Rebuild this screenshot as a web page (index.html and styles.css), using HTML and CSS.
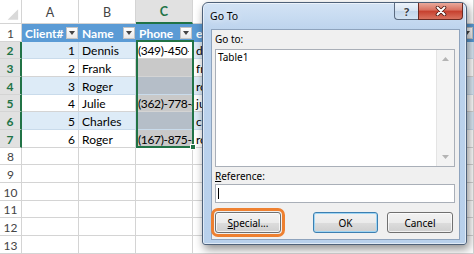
FILE: index.html
```html
<!DOCTYPE html>
<html lang="en">
<head>
    <meta charset="UTF-8">
    <meta name="viewport" content="width=device-width, initial-scale=1.0">
    <title>Go To</title>
    <link rel="stylesheet" href="styles.css">
</head>
<body>
<div class="page">
    <div class="sheet">
        <!-- column headers -->
        <div class="corner"><svg width="22" height="24" viewBox="0 0 22 24"><polygon points="19,9 19,20 8,20" fill="#d9d9d9"/></svg></div>
        <div class="colhd">A</div>
        <div class="colhd">B</div>
        <div class="colhd on">C</div>
        <div class="colhd">D</div>

        <!-- row 1: table header -->
        <div class="rowhd">1</div>
        <div class="th">Client#<span class="dd"></span></div>
        <div class="th">Name<span class="dd"></span></div>
        <div class="th">Phone<span class="dd"></span></div>
        <div class="th">email<span class="dd"></span></div>

        <div class="rowhd on">2</div>
        <div class="cell band num">1</div>
        <div class="cell band">Dennis</div>
        <div class="cell active phone"><span class="clip">(349)-450-2135</span><span class="selection"><span class="handle"></span></span></div>
        <div class="cell band">dennis@mail.com</div>

        <div class="rowhd on">3</div>
        <div class="cell num">2</div>
        <div class="cell">Frank</div>
        <div class="cell shade"></div>
        <div class="cell">frank@mail.com</div>

        <div class="rowhd on">4</div>
        <div class="cell band num">3</div>
        <div class="cell band">Roger</div>
        <div class="cell band shade"></div>
        <div class="cell band">roger@mail.com</div>

        <div class="rowhd on">5</div>
        <div class="cell num">4</div>
        <div class="cell">Julie</div>
        <div class="cell shade phone">(362)-778-4410</div>
        <div class="cell">julie@mail.com</div>

        <div class="rowhd on">6</div>
        <div class="cell band num">5</div>
        <div class="cell band">Charles</div>
        <div class="cell band shade"></div>
        <div class="cell band">charles@mail.com</div>

        <div class="rowhd on">7</div>
        <div class="cell num">6</div>
        <div class="cell">Roger</div>
        <div class="cell shade phone">(167)-875-3092</div>
        <div class="cell">roger.b@mail.com</div>

        <div class="rowhd">8</div><div class="cell"></div><div class="cell"></div><div class="cell"></div><div class="cell"></div>
        <div class="rowhd">9</div><div class="cell"></div><div class="cell"></div><div class="cell"></div><div class="cell"></div>
        <div class="rowhd">10</div><div class="cell"></div><div class="cell"></div><div class="cell"></div><div class="cell"></div>
        <div class="rowhd">11</div><div class="cell"></div><div class="cell"></div><div class="cell"></div><div class="cell"></div>
        <div class="rowhd">12</div><div class="cell"></div><div class="cell"></div><div class="cell"></div><div class="cell"></div>
        <div class="rowhd">13</div><div class="cell"></div><div class="cell"></div><div class="cell"></div><div class="cell"></div>
    </div>

    <!-- Go To dialog -->
    <div class="dialog">
        <div class="titlebar">
            <span class="title">Go To</span>
            <div class="captions">
                <span class="help">?</span>
                <span class="close"><svg width="14" height="10" viewBox="0 0 14 10"><path d="M3.5 1.5 L10.5 8.5 M10.5 1.5 L3.5 8.5" stroke="#4b1710" stroke-width="3.6" stroke-linecap="round"/><path d="M3.5 1.5 L10.5 8.5 M10.5 1.5 L3.5 8.5" stroke="#fff" stroke-width="2" stroke-linecap="round"/></svg></span>
            </div>
        </div>
        <div class="client">
            <label>Go to:</label>
            <div class="listbox">
                <div class="items">Table1</div>
                <div class="vscroll">
                    <svg width="7" height="4" viewBox="0 0 7 4"><polygon points="0,4 7,4 3.5,0" fill="#b4b4b4"/></svg>
                    <svg width="7" height="4" viewBox="0 0 7 4"><polygon points="0,0 7,0 3.5,4" fill="#b4b4b4"/></svg>
                </div>
            </div>
            <label><u>R</u>eference:</label>
            <div class="input"><span class="caret"></span></div>
            <div class="buttons">
                <button class="special"><u>S</u>pecial...</button>
                <span class="spacer"></span>
                <button class="default">OK</button>
                <button>Cancel</button>
            </div>
        </div>
    </div>
</div>
</body>
</html>
```

FILE: styles.css
```css
body {
    margin: 0;
    background: #fff;
    font-family: "Lato", "Liberation Sans", sans-serif;
}
.page {
    position: relative;
    width: 474px;
    height: 254px;
    overflow: hidden;
}

/* spreadsheet */
.sheet {
    display: grid;
    grid-template-columns: 22px 57px 57px 57px 1fr;
    grid-template-rows: 24px repeat(4, 18px 17px 18px) 18px;
    font-size: 12px;
    color: #000;
}
.sheet > div {
    box-sizing: border-box;
    display: flex;
    align-items: center;
    padding: 1px 3px 0;
    border-right: 1px solid #d4d4d4;
    border-bottom: 1px solid #d4d4d4;
    white-space: nowrap;
    overflow: hidden;
}
.sheet > .corner {
    padding: 0;
}
.colhd {
    justify-content: center;
    color: #444;
    font-size: 12.5px;
}
.colhd.on {
    background: #e1e1e1;
    color: #217346;
    font-weight: bold;
    border-bottom: 2px solid #217346;
}
.rowhd {
    justify-content: center;
    color: #444;
}
.rowhd.on {
    background: #e1e1e1;
    color: #217346;
    font-weight: bold;
    border-right: 2px solid #217346;
}
.th {
    background: #5b9bd5;
    color: #fff;
    font-weight: bold;
    padding-right: 0 !important;
    border-right-color: #5b9bd5 !important;
    border-bottom-color: #5b9bd5 !important;
}
.dd {
    margin-left: auto;
    flex: none;
    width: 12px;
    height: 12px;
    box-sizing: border-box;
    border: 1px solid #c4c4c4;
    background: linear-gradient(#ffffff, #e9e9e9);
    display: flex;
    align-items: center;
    justify-content: center;
}
.dd::after {
    content: "";
    border-style: solid;
    border-width: 4px 3.5px 0;
    border-color: #444 transparent transparent;
}
.cell.num {
    justify-content: flex-end;
}
.cell.phone {
    padding-left: 2px;
    letter-spacing: -0.35px;
}
.cell.band {
    background: #ddebf7;
    border-right-color: #c9dbeb;
    border-bottom-color: #c9dbeb;
}
.cell.shade {
    background: #c9c9c9;
}
.cell.band.shade {
    background: #b5bec8;
}
.cell.active {
    position: relative;
    overflow: visible;
    background: #fff;
}
.clip {
    display: block;
    overflow: hidden;
}
.selection {
    position: absolute;
    left: 0;
    top: -2px;
    width: 58px;
    height: 108px;
    box-sizing: border-box;
    border: 2px solid #217346;
}
.handle {
    position: absolute;
    right: -4px;
    bottom: -4px;
    width: 6px;
    height: 6px;
    box-sizing: border-box;
    background: #217346;
    border: 1px solid #fff;
}

/* dialog */
.dialog {
    position: absolute;
    left: 202px;
    top: 2px;
    width: 265px;
    height: 243px;
    box-sizing: border-box;
    display: flex;
    flex-direction: column;
    border: 1px solid #4e6179;
    border-radius: 6px 6px 3px 3px;
    background: linear-gradient(#d3e3f5, #bcd3ed 28px, #b8d0eb);
    box-shadow: inset 0 0 0 1px rgba(255,255,255,0.55), 2px 4px 10px rgba(0,0,0,0.45);
    font-family: "Noto Sans", "Liberation Sans", sans-serif;
    font-size: 10px;
    color: #000;
}
.titlebar {
    height: 26px;
    flex: none;
    display: flex;
    align-items: flex-start;
    padding-left: 7px;
}
.title {
    padding-top: 6px;
    font-size: 10.5px;
    text-shadow: 0 0 6px #fff;
}
.captions {
    margin-left: auto;
    margin-right: 3px;
    display: flex;
}
.help, .close {
    height: 17px;
    box-sizing: border-box;
    display: flex;
    align-items: center;
    justify-content: center;
    border: 1px solid #5b6b80;
    border-top: none;
}
.help {
    width: 24px;
    border-right: none;
    border-radius: 0 0 0 4px;
    background: linear-gradient(#eef4fb, #d5e2f1 50%, #c2d5ea 50%, #d3e3f3);
    color: #3a3f46;
    font-weight: bold;
    font-size: 11px;
    text-shadow: 0 0 2px #fff;
}
.close {
    width: 45px;
    border-radius: 0 0 4px 0;
    border-color: #6b2a22;
    background: linear-gradient(#e9a99b, #d8705f 45%, #c63f2d 50%, #d9735f);
}
.client {
    flex: 1;
    margin: 0 6px 4px 8px;
    border: 1px solid #8ea3bd;
    background: #f0f0f0;
    padding: 3px 4px 0 3px;
    display: flex;
    flex-direction: column;
}
label {
    display: block;
    height: 13px;
    line-height: 13px;
}
.listbox {
    margin-top: 3px;
    height: 118px;
    flex: none;
    box-sizing: border-box;
    border: 1px solid #a9afb8;
    background: #fff;
    display: flex;
}
.items {
    flex: 1;
    padding: 1px 2px;
    line-height: 13px;
}
.vscroll {
    width: 17px;
    background: #f3f3f3;
    border-left: 1px solid #e4e4e4;
    display: flex;
    flex-direction: column;
    justify-content: space-between;
    align-items: center;
    padding: 7px 0 7px;
}
.client label + .input, .listbox + label {
    margin-top: 3px;
}
.input {
    margin-top: 1px !important;
    height: 19px;
    flex: none;
    box-sizing: border-box;
    border: 1px solid #a9afb8;
    background: #fff;
    padding: 3px 2px;
}
.caret {
    display: block;
    width: 1px;
    height: 11px;
    background: #000;
}
.buttons {
    margin-top: 9px;
    display: flex;
    gap: 9px;
    padding-right: 2px;
}
.spacer {
    flex: 1;
}
button {
    width: 66px;
    height: 21px;
    padding: 0;
    font-family: inherit;
    font-size: 10px;
    color: #000;
    border: 1px solid #707070;
    border-radius: 3px;
    background: linear-gradient(#f2f2f2, #ebebeb 50%, #dddddd 50%, #cfcfcf);
    box-shadow: inset 0 0 0 1px rgba(255,255,255,0.7);
}
button.default {
    width: 65px;
    border-color: #3c7fb1;
    box-shadow: inset 0 0 0 1px #9fd5f3;
}
button.special {
    outline: 3px solid #ee8030;
    outline-offset: 1px;
}
```
